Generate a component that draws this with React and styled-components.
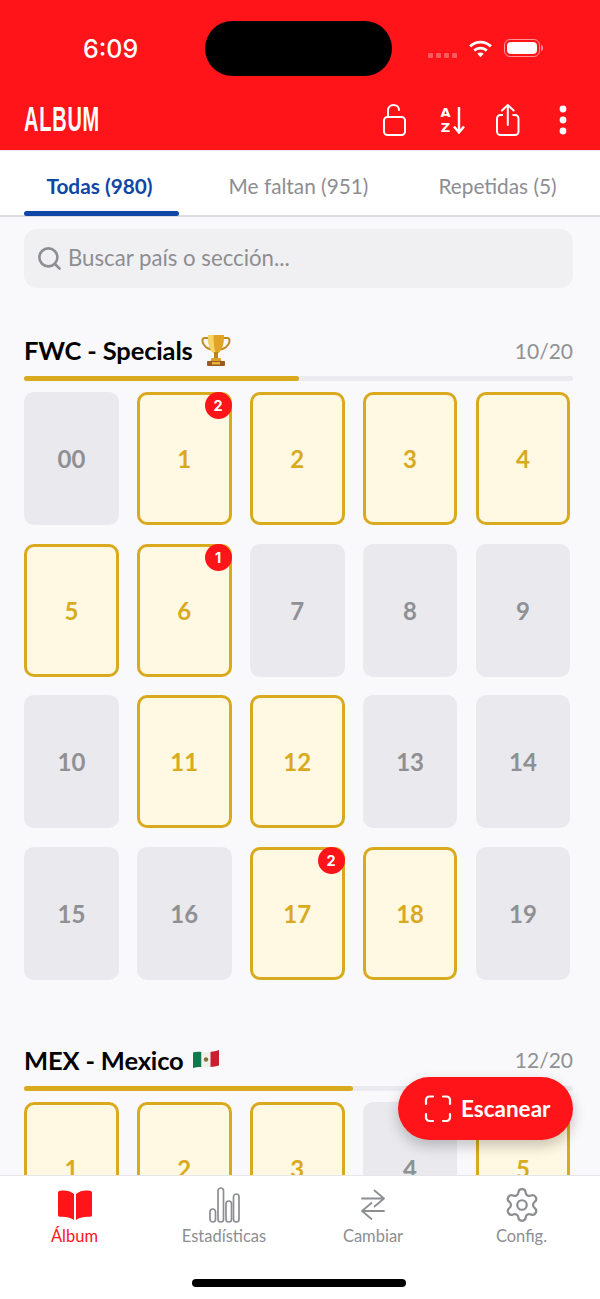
import React from 'react';
import styled, { createGlobalStyle } from 'styled-components';
import { Settings, Search } from 'lucide-react';

const Global = createGlobalStyle`
  html, body { margin: 0; padding: 0; background: #f9f9fc; }
  * { box-sizing: border-box; }
  body { font-family: Lato, "Noto Sans", sans-serif; }
`;

const Phone = styled.div`
  position: relative; width: 600px; height: 1299px; overflow: hidden;
  display: flex; flex-direction: column; background: #f9f9fc;
`;
const RedHeader = styled.header`
  flex: none; height: 150px; background: #ff1419; color: #fff;
  display: flex; flex-direction: column;
`;
const StatusBar = styled.div`
  height: 96px; flex: none; display: flex; align-items: flex-start;
`;
const Time = styled.div`
  width: 205px; padding-top: 34px; padding-left: 83px;
  font: 500 25px/30px Inter, sans-serif; color: #fff;
`;
const Island = styled.div`
  margin-top: 21px; width: 187px; height: 55px; border-radius: 28px; background: #000; flex: none;
`;
const StatusRight = styled.div`
  margin-left: 36px; margin-top: 38px; display: flex; align-items: center; height: 20px;
`;
const SignalDots = styled.div`
  display: flex; gap: 3px; margin-right: 11px; margin-top: 14px;
  i { width: 5px; height: 5px; border-radius: 1px; background: rgba(255,255,255,.3); display: block; }
`;
const Battery = styled.div`
  margin-left: 11px; width: 36px; height: 18px; border: 1px solid rgba(255,255,255,.55); border-radius: 6px; padding: 2px; position: relative;
  &::before { content: ''; display: block; width: 100%; height: 100%; background: #fff; border-radius: 4px; }
  &::after { content: ''; position: absolute; right: -4px; top: 5px; width: 2px; height: 6px; border-radius: 0 2px 2px 0; background: rgba(255,255,255,.5); }
`;
const ToolBar = styled.div`
  flex: 1; display: flex; align-items: center; justify-content: space-between; padding: 0 27px 6px 24px;
`;
const Title = styled.h1`
  margin: -2px 0 0; font: 700 35px/36px "Liberation Sans", sans-serif; letter-spacing: 1.4px; color: #fff;
  transform: scaleX(.57); transform-origin: left center;
`;
const ToolIcons = styled.div`
  display: flex; align-items: center; height: 40px;
`;
const ToolSlot = styled.div`
  width: ${p => p.$w}px; display: flex; justify-content: flex-start; align-items: center; color: #fff;
`;
const AZ = styled.div`
  display: flex; align-items: center; gap: 2px;
`;
const AZText = styled.div`
  font: 700 13px/15.2px "DejaVu Sans", sans-serif; color: #fff; display: flex; flex-direction: column; align-items: center; width: 11px;
`;
const Tabs = styled.nav`
  flex: none; height: 67px; background: #fff; border-bottom: 2px solid #dcdde0; display: flex; border-top: 1px solid #eceaea;
`;
const Tab = styled.div`
  width: ${p => p.$w}px; flex: none; display: flex; justify-content: center; padding-top: 21px;
  padding-right: ${p => p.$active ? 4 : 0}px;
  font-weight: ${p => p.$active ? 700 : 400}; font-size: 20.8px; line-height: 27px;
  color: ${p => p.$active ? '#0f46a8' : '#8d8e92'}; position: relative;
  margin-left: ${p => p.$ml || 0}px;
  ${p => p.$active && `&::after { content: ''; position: absolute; left: 0; right: 0; bottom: -1px; height: 5px; background: #0f46a8; border-radius: 3px; }`}
`;
const Main = styled.main`
  flex: 1; min-height: 0; overflow: hidden; padding: 12px 27px 0 24px;
`;
const SearchBox = styled.div`
  height: 59px; border-radius: 13px; background: #f0f0f3; display: flex; align-items: center; padding-left: 12px; gap: 5px;
  color: #8d8e92; font-size: 22.2px; margin-bottom: 45px;
  span { margin-top: -2px; }
`;
const SectionHead = styled.div`
  display: flex; justify-content: space-between; align-items: center; height: 34px;
`;
const SectionName = styled.h2`
  margin: 0; font: 700 25.5px/34px Lato, sans-serif; letter-spacing: -.15px; color: #000; display: flex; align-items: center; gap: 8px;
`;
const Count = styled.span`
  font-size: 21px; color: #909195;
`;
const Track = styled.div`
  height: 5px; border-radius: 3px; background: #ebebef; margin-top: 9px; margin-bottom: 11px;
`;
const Fill = styled.div`
  height: 100%; border-radius: 3px; background: #d9aa1e;
`;
const Grid = styled.div`
  display: grid; grid-template-columns: repeat(5, 94.8px); column-gap: 18.1px; row-gap: 18.6px; margin-bottom: 63px;
`;
const Card = styled.div`
  position: relative; height: 133px; border-radius: 10px; display: flex; align-items: center; justify-content: center;
  font-weight: 700; font-size: 24px;
  background: ${p => p.$owned ? '#fff8e2' : '#e9e9ee'};
  border: ${p => p.$owned ? '3px solid #d9aa1e' : 'none'};
  color: ${p => p.$owned ? '#d9aa1e' : '#8f9094'};
`;
const Badge = styled.div`
  position: absolute; top: -3px; right: -3px; width: 27px; height: 27px; border-radius: 50%;
  background: #ff1419; color: #fff; font: 700 14.5px/27px Inter, sans-serif; text-align: center;
`;
const Fab = styled.button`
  position: absolute; left: 398px; top: 1077px; width: 175px; height: 63px; border-radius: 32px; border: none;
  background: #ff1419; color: #fff; display: flex; align-items: center; padding: 0 0 0 26px; gap: 9px;
  font: 700 22.5px/28px Lato, sans-serif; box-shadow: 0 6px 14px rgba(0,0,0,.22);
`;
const BottomBar = styled.nav`
  position: absolute; left: 0; right: 0; bottom: 0; height: 124px; background: #fff; border-top: 1px solid #e6e6ea;
  display: grid; grid-template-columns: 149px 150px 148px 149px;
`;
const NavItem = styled.div`
  display: flex; flex-direction: column; align-items: center; padding-top: 11px;
  color: ${p => p.$active ? '#ff1419' : '#8d8e92'}; font-size: 16.5px; line-height: 20px;
`;
const NavIcon = styled.div`
  height: 36px; display: flex; align-items: center; justify-content: center; margin-bottom: 3px;
`;
const HomeBar = styled.div`
  position: absolute; left: 192px; top: 1279px; width: 214px; height: 8px; border-radius: 4px; background: #000;
`;

const Trophy = () => (
  <svg width="30" height="32" viewBox="0 0 30 32" aria-hidden="true">
    <path d="M8 4H3.500C1.500 4 1 6 1.800 8.500 3 12 6.500 14.500 10 15.500" fill="none" stroke="#c08a1c" strokeWidth="2"/>
    <path d="M22 4h4.500c2 0 2.500 2 1.700 4.500C27 12 23.500 14.500 20 15.500" fill="none" stroke="#c08a1c" strokeWidth="2"/>
    <path d="M7 1h16c0 8-1 14-5.500 18h-5C8 15 7 9 7 1z" fill="#e3a325"/>
    <path d="M7 1h5.500c0 8 .5 14 2.500 18h-2.500C8 15 7 9 7 1z" fill="#f7d468"/>
    <rect x="13" y="18" width="4" height="6" fill="#b9841c"/>
    <path d="M10.500 24h9l1 3h-11z" fill="#dca12a"/>
    <rect x="6" y="27" width="18" height="5" rx="1" fill="#9a5a20"/>
    <rect x="11" y="28" width="8" height="2.500" fill="#e3b13c"/>
  </svg>
);
const Flag = () => (
  <svg width="28" height="21" viewBox="0 0 28 21" aria-hidden="true">
    <path d="M1 3.500C4 2.500 7 2.500 9.500 3v15c-3-.3-5.500 0-8.500 1z" fill="#0f7a4d"/>
    <path d="M9.500 3c3 .6 6 .6 9 0v15c-3 .6-6 .6-9 0z" fill="#f1f1ec"/>
    <path d="M18.500 3c3-.6 5.500-1 8.500-2v15.500c-3 1-5.500 1-8.500 1.500z" fill="#c8202f"/>
    <circle cx="14" cy="10.500" r="2.200" fill="#8d6b3a"/>
  </svg>
);
const Lock = () => (
  <svg width="26" height="34" viewBox="0 0 26 34" fill="none" stroke="#fff" strokeWidth="2" aria-hidden="true">
    <rect x="2" y="14" width="21" height="18" rx="3.500"/>
    <path d="M6 14V7.500C6 4 8.500 2 11.500 2 14.500 2 17 4 17 7" strokeLinecap="round"/>
  </svg>
);
const DownArrow = () => (
  <svg width="12" height="28" viewBox="0 0 12 28" fill="none" stroke="#fff" strokeWidth="2.400" aria-hidden="true">
    <path d="M6 1v25M1 20.500l5 6 5-6" />
  </svg>
);
const Share = () => (
  <svg width="26" height="34" viewBox="0 0 26 34" fill="none" stroke="#fff" strokeWidth="2" aria-hidden="true">
    <path d="M8 12H5.500A3.500 3.500 0 0 0 2 15.500v13A3.500 3.500 0 0 0 5.500 32h14.500a3.500 3.500 0 0 0 3.500-3.500v-13A3.500 3.500 0 0 0 20 12h-2.500"/>
    <path d="M12.800 22V2M7 7.500l5.800-5.500 5.800 5.500" strokeLinecap="round" strokeLinejoin="round"/>
  </svg>
);
const Dots = () => (
  <svg width="10" height="30" viewBox="0 0 10 30" fill="#fff" aria-hidden="true">
    <circle cx="5" cy="4" r="3.400"/><circle cx="5" cy="15" r="3.400"/><circle cx="5" cy="26" r="3.400"/>
  </svg>
);
const Wifi = () => (
  <svg width="25" height="19" viewBox="0 0 24 18" fill="#fff" aria-hidden="true">
    <path d="M12 1.500c4.300 0 8.100 1.700 10.900 4.400L21 8C18.700 5.800 15.500 4.300 12 4.300S5.300 5.800 3 8L1.100 5.900C3.900 3.200 7.700 1.500 12 1.500z"/>
    <path d="M12 7.200c2.700 0 5.100 1 6.900 2.800l-1.900 2.100c-1.300-1.300-3.100-2.100-5-2.100s-3.700.8-5 2.100L5.100 10C6.900 8.200 9.300 7.200 12 7.200z"/>
    <path d="M12 12.800c1.200 0 2.200.4 3 1.200l-3 3.400L9 14c.8-.8 1.800-1.200 3-1.200z"/>
  </svg>
);
const ScanIcon = () => (
  <svg width="28" height="28" viewBox="0 0 28 28" fill="none" stroke="#fff" strokeWidth="2.200" strokeLinecap="round" aria-hidden="true">
    <path d="M2 9V5a3.500 3.500 0 0 1 3.500-3.500H9M19 1.500h3.500A3.500 3.500 0 0 1 26 5v4M26 19v3.500a3.500 3.500 0 0 1-3.500 3.500H19M9 26H5.500A3.500 3.500 0 0 1 2 22.500V19"/>
  </svg>
);
const Book = () => (
  <svg width="34" height="32" viewBox="0 0 34 32" fill="#ff1419" aria-hidden="true">
    <path d="M0 4c0-1 .7-2 2-2.200C7 1 12 1.500 16 5v26c-3.500-2.500-9-3.500-13.500-3.200C1 27.900 0 27 0 26z"/>
    <path d="M34 4c0-1-.7-2-2-2.200C27 1 22 1.500 18 5v26c3.500-2.500 9-3.500 13.500-3.200 1.500.1 2.500-.8 2.500-1.800z"/>
  </svg>
);
const Bars = () => (
  <svg width="31" height="36" viewBox="0 0 31 36" fill="none" stroke="#8d8e92" strokeWidth="1.700" aria-hidden="true">
    <rect x="1" y="22" width="5.500" height="13" rx="2.700"/>
    <rect x="9" y="1" width="5.500" height="34" rx="2.700"/>
    <rect x="17" y="14" width="5.500" height="21" rx="2.700"/>
    <rect x="24.500" y="7" width="5.500" height="28" rx="2.700"/>
  </svg>
);
const Swap = () => (
  <svg width="28" height="34" viewBox="0 0 28 34" fill="none" stroke="#8d8e92" strokeWidth="1.800" strokeLinecap="round" strokeLinejoin="round" aria-hidden="true">
    <path d="M3 10.500h22M15.500 2.500l9.500 8-9.500 8M25 23H3M12.500 15L3 23l9.500 8"/>
  </svg>
);

const owned1 = { 1: 2, 2: 0, 3: 0, 4: 0, 5: 0, 6: 1, 11: 0, 12: 0, 17: 2, 18: 0 };
const labels = ['00', ...Array.from({ length: 19 }, (_, i) => String(i + 1))];
const mexOwned = [1, 2, 3, 5];

export default function App() {
  return (
    <Phone>
      <Global />
      <RedHeader>
        <StatusBar>
          <Time>6:09</Time>
          <Island />
          <StatusRight>
            <SignalDots><i /><i /><i /><i /></SignalDots>
            <Wifi />
            <Battery />
          </StatusRight>
        </StatusBar>
        <ToolBar>
          <Title>ALBUM</Title>
          <ToolIcons>
            <ToolSlot $w={58}><Lock /></ToolSlot>
            <ToolSlot $w={55}>
              <AZ>
                <AZText><span>A</span><span>Z</span></AZText>
                <DownArrow />
              </AZ>
            </ToolSlot>
            <ToolSlot $w={63}><Share /></ToolSlot>
            <ToolSlot $w={15}><Dots /></ToolSlot>
          </ToolIcons>
        </ToolBar>
      </RedHeader>
      <Tabs>
        <Tab $active $w={155} $ml={24}>Todas (980)</Tab>
        <Tab $w={239}>Me faltan (951)</Tab>
        <Tab $w={159}>Repetidas (5)</Tab>
      </Tabs>
      <Main>
        <SearchBox><Search size={27} strokeWidth={2.300} /><span>Buscar país o sección...</span></SearchBox>
        <SectionHead>
          <SectionName>FWC - Specials <Trophy /></SectionName>
          <Count>10/20</Count>
        </SectionHead>
        <Track><Fill style={{ width: '50%' }} /></Track>
        <Grid>
          {labels.map(l => {
            const isOwned = Object.prototype.hasOwnProperty.call(owned1, l);
            return (
              <Card key={l} $owned={isOwned}>
                {l}
                {owned1[l] > 0 && <Badge>{owned1[l]}</Badge>}
              </Card>
            );
          })}
        </Grid>
        <SectionHead>
          <SectionName>MEX - Mexico <Flag /></SectionName>
          <Count>12/20</Count>
        </SectionHead>
        <Track><Fill style={{ width: '60%' }} /></Track>
        <Grid>
          {[1, 2, 3, 4, 5].map(n => (
            <Card key={n} $owned={mexOwned.includes(n)}>{n}</Card>
          ))}
        </Grid>
      </Main>
      <BottomBar>
        <NavItem $active><NavIcon><Book /></NavIcon>Álbum</NavItem>
        <NavItem><NavIcon><Bars /></NavIcon>Estadísticas</NavItem>
        <NavItem><NavIcon><Swap /></NavIcon>Cambiar</NavItem>
        <NavItem><NavIcon><Settings size={38} strokeWidth={1.400} /></NavIcon>Config.</NavItem>
      </BottomBar>
      <Fab><ScanIcon />Escanear</Fab>
      <HomeBar />
    </Phone>
  );
}
